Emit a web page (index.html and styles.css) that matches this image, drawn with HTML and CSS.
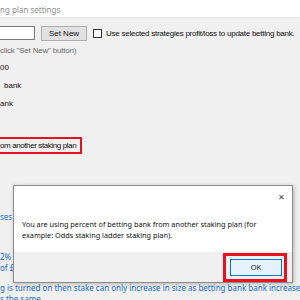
FILE: index.html
```html
<!DOCTYPE html>
<html lang="en">
<head>
  <meta charset="UTF-8" />
  <title>Betting plan settings</title>
  <link rel="stylesheet" href="styles.css">
</head>
<body>

  <!-- Main settings window (left part off screen) -->
  <div class="window">
    <div class="titlebar">ng plan settings</div>

    <div class="form">
      <div class="bank-row">
        <div class="textbox"></div>
        <button class="win-btn">Set New</button>
        <span class="check"></span>
        <span class="check-label">Use selected strategies profit/loss to update betting bank.</span>
      </div>

      <div class="line hint">click "Set New" button)</div>
      <div class="line">00</div>
      <div class="line indent">bank</div>
      <div class="line">ank</div>

      <div class="marked">om another staking plan</div>

      <div class="notes">
        <div class="note n1">ses</div>
        <div class="note n2">2%</div>
        <div class="note">of £</div>
        <div class="note n3">g is turned on then stake can only increase in size as betting bank bank increases</div>
        <div class="note">s the same</div>
      </div>
    </div>
  </div>

  <!-- Message box over the window -->
  <div class="msgbox">
    <span class="close">&#x2715;</span>
    <div class="msg-body">
      You are using percent of betting bank from another staking plan (for example: Odds staking ladder staking plan).
    </div>
    <div class="msg-footer">
      <div class="marked-btn">
        <button class="ok-btn">OK</button>
      </div>
    </div>
  </div>

</body>
</html>
```

FILE: styles.css
```css
body {
  margin: 0;
  width: 300px;
  height: 300px;
  overflow: hidden;
  background: #f0f0f0;
  font-family: "Liberation Sans", Arial, sans-serif;
  font-size: 8px;
  color: #111;
  position: relative;
}

.titlebar {
  height: 18px;
  background: #fff;
  color: #8f8f8f;
  font-family: "Noto Sans", sans-serif;
  font-size: 8px;
  line-height: 19px;
  border-bottom: 1px solid #e6e6e6;
  box-sizing: border-box;
}

.form {
  padding-top: 7px;
}

.bank-row {
  display: flex;
  align-items: center;
  height: 16px;
}

.textbox {
  width: 35px;
  height: 14px;
  background: #fff;
  border: 1px solid #7a7a7a;
  border-left: 0;
  box-sizing: border-box;
}

.win-btn {
  margin-left: 6px;
  width: 46px;
  height: 15px;
  padding: 0;
  background: #e1e1e1;
  border: 1px solid #adadad;
  font-family: "Liberation Sans", Arial, sans-serif;
  font-size: 8px;
  color: #111;
}

.check {
  margin-left: 6px;
  width: 9px;
  height: 9px;
  background: #fff;
  border: 1px solid #333;
  box-sizing: border-box;
}

.check-label {
  margin-left: 4px;
  letter-spacing: -0.25px;
  white-space: nowrap;
}

.line {
  height: 18px;
  line-height: 18px;
  white-space: nowrap;
}

.hint {
  margin-top: 2px;
  height: 16px;
  line-height: 16px;
  color: #6d6d6d;
  letter-spacing: -0.2px;
}

.indent {
  padding-left: 4px;
}

.marked {
  margin-top: 24px;
  width: 82px;
  height: 17px;
  line-height: 14px;
  border: 2px solid #e81123;
  border-left: 0;
  box-sizing: border-box;
  letter-spacing: -0.4px;
  white-space: nowrap;
}

.notes {
  margin-top: 57px;
  color: #1a6dc6;
  font-family: "Noto Sans", sans-serif;
  font-size: 8px;
}

.note {
  height: 11px;
  line-height: 11px;
  white-space: nowrap;
}

.n2 {
  margin-top: 29px;
}

.n3 {
  margin-top: 9px;
}

.msgbox {
  position: absolute;
  left: 13px;
  top: 185px;
  width: 280px;
  height: 98px;
  background: #fff;
  border: 1px solid #8c8c8c;
  box-sizing: border-box;
  box-shadow: 1px 1px 4px rgba(0,0,0,0.25);
  display: flex;
  flex-direction: column;
  font-family: "Noto Sans", sans-serif;
  font-size: 7.3px;
}

.close {
  position: absolute;
  right: 7px;
  top: 5px;
  font-size: 8px;
  color: #444;
}

.msg-body {
  flex: 1;
  padding: 33px 26px 0 8px;
  line-height: 11px;
  color: #111;
}

.msg-footer {
  height: 30px;
  background: #f0f0f0;
  display: flex;
  justify-content: flex-end;
  align-items: center;
  padding-right: 5px;
}

.marked-btn {
  border: 3px solid #e81123;
  padding: 3px 2px 3px 4px;
}

.ok-btn {
  display: block;
  width: 52px;
  height: 17px;
  padding: 0;
  background: #e5f1fb;
  border: 1px solid #0078d7;
  font-family: "Noto Sans", sans-serif;
  font-size: 7.5px;
  color: #111;
}
```
